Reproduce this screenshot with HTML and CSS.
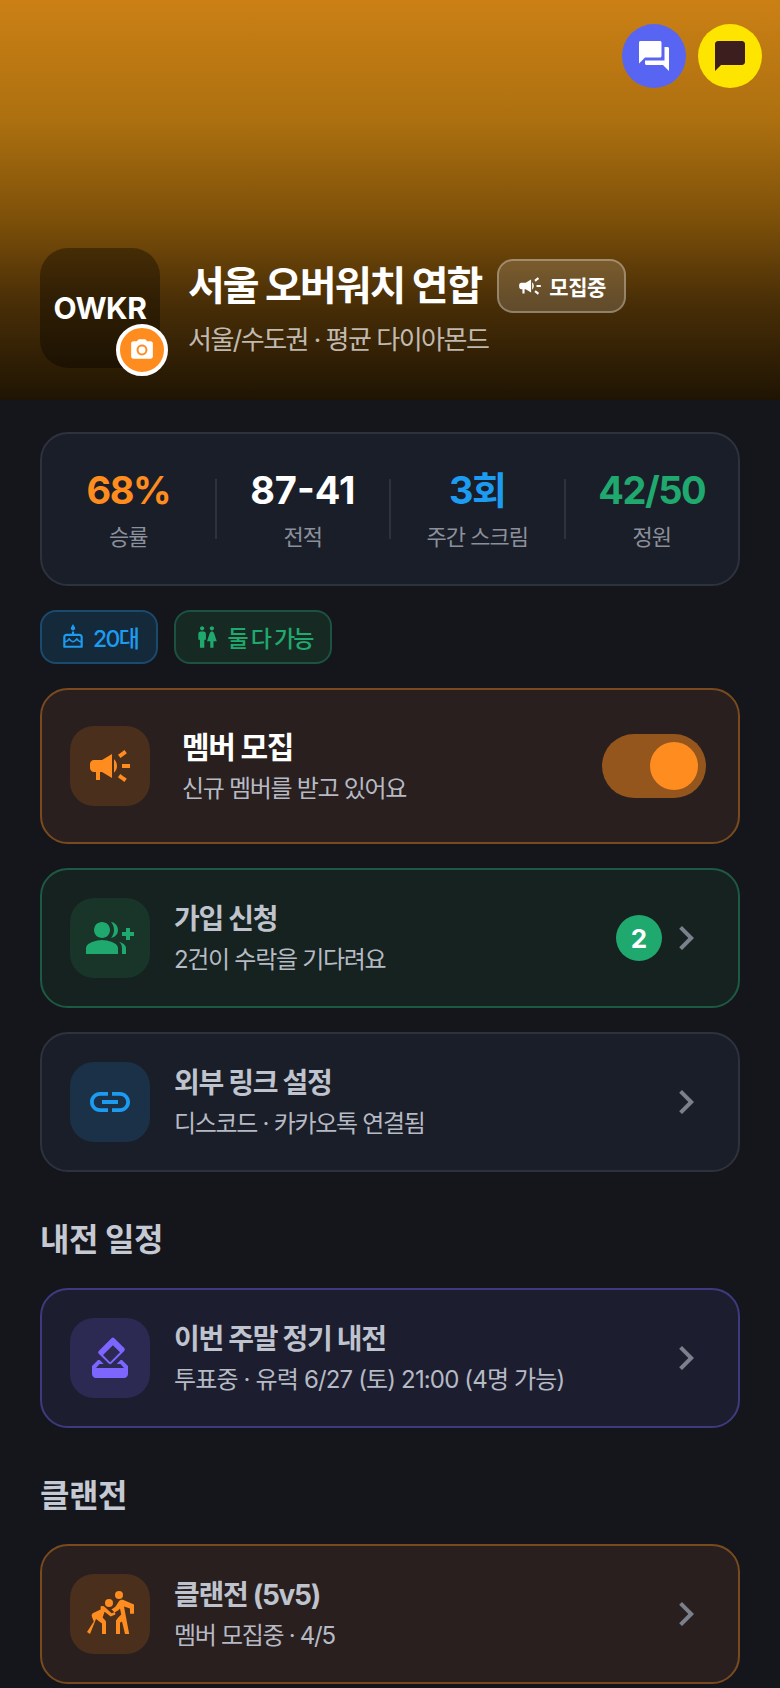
FILE: index.html
```html
<!DOCTYPE html>
<html lang="ko">
<head>
    <meta charset="UTF-8">
    <meta name="viewport" content="width=device-width, initial-scale=1.0">
    <title>서울 오버워치 연합</title>
    <link rel="stylesheet" href="styles.css">
</head>
<body>
    <header class="hero">
        <div class="hero-actions">
            <a class="round-btn discord">
                <svg viewBox="0 0 24 24"><path d="M21 6h-2v9H6v2c0 .55.45 1 1 1h11l4 4V7c0-.55-.45-1-1-1zm-4 6V3c0-.55-.45-1-1-1H3c-.55 0-1 .45-1 1v14l4-4h10c.55 0 1-.45 1-1z"/></svg>
            </a>
            <a class="round-btn kakao">
                <svg viewBox="0 0 24 24"><path d="M20 2H4c-1.1 0-2 .9-2 2v18l4-4h14c1.1 0 2-.9 2-2V4c0-1.1-.9-2-2-2z"/></svg>
            </a>
        </div>
        <div class="hero-info">
            <div class="avatar">
                <span>OWKR</span>
                <div class="avatar-edit">
                    <svg viewBox="0 0 24 24"><circle cx="12" cy="12" r="3.2"/><path d="M9 2L7.17 4H4c-1.1 0-2 .9-2 2v12c0 1.1.9 2 2 2h16c1.1 0 2-.9 2-2V6c0-1.1-.9-2-2-2h-3.17L15 2H9zm3 15c-2.76 0-5-2.24-5-5s2.24-5 5-5 5 2.24 5 5-2.24 5-5 5z"/></svg>
                </div>
            </div>
            <div class="hero-text">
                <div class="hero-title">
                    <h1>서울 오버워치 연합</h1>
                    <span class="recruit-pill">
                        <svg viewBox="0 0 24 24"><use href="#i-campaign"/></svg>
                        모집중
                    </span>
                </div>
                <p class="hero-sub">서울/수도권 · 평균 다이아몬드</p>
            </div>
        </div>
    </header>

    <main class="content">
        <section class="stats">
            <div class="stat">
                <b class="orange">68%</b>
                <span>승률</span>
            </div>
            <i class="divider"></i>
            <div class="stat">
                <b class="white">87-41</b>
                <span>전적</span>
            </div>
            <i class="divider"></i>
            <div class="stat">
                <b class="blue">3회</b>
                <span>주간 스크림</span>
            </div>
            <i class="divider"></i>
            <div class="stat">
                <b class="green">42/50</b>
                <span>정원</span>
            </div>
        </section>

        <div class="chips">
            <span class="chip chip-blue">
                <svg viewBox="0 0 24 24"><path d="M12 6c1.11 0 2-.9 2-2 0-.38-.1-.73-.29-1.03L12 0l-1.71 2.97c-.19.3-.29.65-.29 1.03 0 1.1.9 2 2 2zm6 3h-5V7h-2v2H6c-1.66 0-3 1.34-3 3v9c0 .55.45 1 1 1h16c.55 0 1-.45 1-1v-9c0-1.66-1.34-3-3-3zm1 11H5v-3c.9-.01 1.76-.37 2.4-1.01l1.09-1.07 1.07 1.07c1.31 1.31 3.59 1.3 4.89 0l1.08-1.07 1.07 1.07c.64.64 1.5 1 2.4 1.01v3zm0-4.5c-.51-.01-.99-.2-1.35-.57l-2.13-2.13-2.14 2.13c-.74.74-2.03.74-2.77 0L8.48 12.8l-2.14 2.13c-.35.36-.83.56-1.34.57V12c0-.55.45-1 1-1h12c.55 0 1 .45 1 1v3.5z"/></svg>
                20대
            </span>
            <span class="chip chip-green">
                <svg viewBox="0 0 24 24"><path d="M5.5 22v-7.5H4V9c0-1.1.9-2 2-2h3c1.1 0 2 .9 2 2v5.5H9.5V22h-4zM18 22v-6h3l-2.54-7.63C18.18 7.55 17.42 7 16.56 7h-.12c-.86 0-1.63.55-1.9 1.37L12 16h3v6h3zM7.5 6c1.11 0 2-.89 2-2s-.89-2-2-2-2 .89-2 2 .89 2 2 2zm9 0c1.11 0 2-.89 2-2s-.89-2-2-2-2 .89-2 2 .89 2 2 2z"/></svg>
                둘 다 가능
            </span>
        </div>

        <div class="card card-orange card-toggle">
            <div class="card-icon">
                <svg viewBox="0 0 24 24"><use href="#i-campaign"/></svg>
            </div>
            <div class="card-text">
                <h3>멤버 모집</h3>
                <p>신규 멤버를 받고 있어요</p>
            </div>
            <div class="toggle"><i></i></div>
        </div>

        <div class="card card-green">
            <div class="card-icon">
                <svg viewBox="0 0 24 24"><path d="M22 9V7h-2v2h-2v2h2v2h2v-2h2V9z"/><path d="M8 12c2.21 0 4-1.79 4-4s-1.79-4-4-4-4 1.79-4 4 1.79 4 4 4z"/><path d="M8 13c-2.67 0-8 1.34-8 4v3h16v-3c0-2.66-5.33-4-8-4z"/><path d="M12.51 4.05C13.43 5.11 14 6.49 14 8s-.57 2.89-1.49 3.95C14.47 11.7 16 10.04 16 8s-1.53-3.7-3.49-3.95z"/><path d="M16.53 13.83C17.42 14.66 18 15.7 18 17v3h2v-3c0-1.45-1.59-2.51-3.47-3.17z"/></svg>
            </div>
            <div class="card-text">
                <h3>가입 신청</h3>
                <p>2건이 수락을 기다려요</p>
            </div>
            <span class="count">2</span>
            <svg class="chevron" viewBox="0 0 24 24"><use href="#i-chevron"/></svg>
        </div>

        <div class="card card-blue">
            <div class="card-icon">
                <svg viewBox="0 0 24 24"><path d="M3.9 12c0-1.71 1.39-3.1 3.1-3.1h4V7H7c-2.76 0-5 2.24-5 5s2.24 5 5 5h4v-1.9H7c-1.71 0-3.1-1.39-3.1-3.1zM8 13h8v-2H8v2zm9-6h-4v1.9h4c1.71 0 3.1 1.39 3.1 3.1s-1.39 3.1-3.1 3.1h-4V17h4c2.76 0 5-2.24 5-5s-2.24-5-5-5z"/></svg>
            </div>
            <div class="card-text">
                <h3>외부 링크 설정</h3>
                <p>디스코드 · 카카오톡 연결됨</p>
            </div>
            <svg class="chevron" viewBox="0 0 24 24"><use href="#i-chevron"/></svg>
        </div>

        <h2>내전 일정</h2>

        <div class="card card-purple">
            <div class="card-icon">
                <svg viewBox="0 0 24 24"><path d="M18 13h-.68l-2 2h1.91L19 17H5l1.78-2h2.05l-2-2H6l-3 3v4c0 1.1.89 2 1.99 2H19c1.1 0 2-.89 2-2v-4l-3-3z"/><path fill-rule="evenodd" transform="translate(0 1.2)" d="M17 7.95l-4.95 4.95-3.54-3.54 4.95-4.95L17 7.95zm-4.24-7.07L6.39 7.25c-.39.39-.39 1.02 0 1.41l4.95 4.95c.39.39 1.02.39 1.41 0l6.36-6.36c.39-.39.39-1.02 0-1.41L14.16.89c-.38-.4-1.01-.4-1.4-.01z"/></svg>
            </div>
            <div class="card-text">
                <h3>이번 주말 정기 내전</h3>
                <p class="date-line">투표중 · 유력 6/27 (토) 21:00 (4명 가능)</p>
            </div>
            <svg class="chevron" viewBox="0 0 24 24"><use href="#i-chevron"/></svg>
        </div>

        <h2>클랜전</h2>

        <div class="card card-orange">
            <div class="card-icon">
                <svg viewBox="0 0 24 24"><circle cx="16.5" cy="2.5" r="2"/><circle cx="11.5" cy="6.5" r="2"/><path d="M24 11.9V7.2l-5-2.1c-1-.4-2.1-.1-2.7.8l-1 1.6c-.6 1-1.5 1.7-2.6 2.1l1.6 1.6c1.1-.4 2-1.1 2.7-1.9l.6 3-1.6 1.6L15 15.3V22h2v-5.6l1-.7 1.5 6.3h2.1L19 8.2l3 1.1v2.6h2z"/><path d="M7.3 8.3c.8-.4 1.6-.3 2.2.3l3.3 3 1.7-.6.2 1.3-2.4.9-3-2.3-1 2.8 1.4 1.6c.2.3.3.5.3.9V22H8v-5.2l-3-2.3-3 7.5-1.5-1 3.4-5.2-.9-2.3c-.4-.8-.1-1.6.6-2l3.7-1.7z"/></svg>
            </div>
            <div class="card-text">
                <h3>클랜전 (5v5)</h3>
                <p>멤버 모집중 · 4/5</p>
            </div>
            <svg class="chevron" viewBox="0 0 24 24"><use href="#i-chevron"/></svg>
        </div>
    </main>

    <svg class="icon-defs">
        <symbol id="i-campaign" viewBox="0 0 24 24"><path d="M18 11v2h4v-2h-4zm-2 6.61c.96.71 2.21 1.65 3.2 2.39.4-.53.8-1.07 1.2-1.6-.99-.74-2.24-1.68-3.2-2.4-.4.54-.8 1.08-1.2 1.61zM20.4 5.6c-.4-.53-.8-1.07-1.2-1.6-.99.74-2.24 1.68-3.2 2.4.4.53.8 1.07 1.2 1.6.96-.72 2.21-1.65 3.2-2.4zM4 9c-1.1 0-2 .9-2 2v2c0 1.1.9 2 2 2h1v4h2v-4h1l5 3V6L8 9H4zm11.5 3c0-1.33-.58-2.53-1.5-3.35v6.69c.92-.81 1.5-2.01 1.5-3.34z"/></symbol>
        <symbol id="i-chevron" viewBox="0 0 24 24"><path d="M10 6L8.59 7.41 13.17 12l-4.58 4.59L10 18l6-6z"/></symbol>
    </svg>
</body>
</html>
```

FILE: styles.css
```css
* {
    box-sizing: border-box;
}

body {
    margin: 0;
    background-color: #14161b;
    color: #fff;
    font-family: Inter, "Noto Sans CJK KR", sans-serif;
}

svg {
    display: block;
    fill: currentColor;
    flex-shrink: 0;
}

.icon-defs {
    display: none;
}

h1, h2, h3, p {
    margin: 0;
}

/* hero */
.hero {
    height: 400px;
    position: relative;
    display: flex;
    align-items: flex-end;
    padding: 0 40px 32px;
    background: linear-gradient(to bottom, #cb8015 0%, #ad7010 30%, #7d5009 55%, #4a2f07 75%, #1f1403 100%);
}

.hero-actions {
    position: absolute;
    top: 24px;
    right: 18px;
    display: flex;
    gap: 12px;
}

.round-btn {
    width: 64px;
    height: 64px;
    border-radius: 50%;
    display: flex;
    align-items: center;
    justify-content: center;
}

.round-btn svg {
    width: 36px;
    height: 36px;
}

.discord {
    background-color: #5865f2;
    color: #fff;
}

.kakao {
    background-color: #fee500;
    color: #3c1e1e;
}

.hero-info {
    display: flex;
    align-items: center;
    gap: 28px;
}

.avatar {
    width: 120px;
    height: 120px;
    border-radius: 28px;
    background-color: rgba(0, 0, 0, 0.35);
    display: flex;
    align-items: center;
    justify-content: center;
    position: relative;
    font-size: 30px;
    font-weight: 700;
    letter-spacing: -0.5px;
}

.avatar-edit {
    position: absolute;
    right: -8px;
    bottom: -8px;
    width: 52px;
    height: 52px;
    border-radius: 50%;
    border: 4px solid #fff;
    background-color: #ff8c1f;
    display: flex;
    align-items: center;
    justify-content: center;
}

.avatar-edit svg {
    width: 26px;
    height: 26px;
}

.hero-title {
    display: flex;
    align-items: center;
    gap: 16px;
}

h1 {
    font-size: 40px;
    line-height: 54px;
    font-weight: 700;
    letter-spacing: -2px;
}

.recruit-pill {
    height: 54px;
    display: flex;
    align-items: center;
    gap: 6px;
    padding: 0 18px 0 18px;
    border: 2px solid rgba(255, 255, 255, 0.3);
    border-radius: 16px;
    background-color: rgba(255, 255, 255, 0.15);
    font-size: 21px;
    font-weight: 700;
    letter-spacing: -0.5px;
}

.recruit-pill svg {
    width: 26px;
    height: 26px;
}

.hero-sub {
    margin-top: 10px;
    font-size: 26px;
    line-height: 34px;
    letter-spacing: -1.5px;
    color: rgba(255, 255, 255, 0.7);
}

/* content */
.content {
    padding: 32px 40px 0;
    display: flex;
    flex-direction: column;
    gap: 24px;
}

.stats {
    height: 154px;
    display: flex;
    align-items: center;
    background-color: #1a1e28;
    border: 2px solid #2e323d;
    border-radius: 28px;
}

.stat {
    flex: 1;
    text-align: center;
}

.stat b {
    display: block;
    font-size: 38px;
    line-height: 46px;
    font-weight: 700;
    letter-spacing: -1.5px;
    margin-bottom: 9px;
}

.stat span {
    display: block;
    font-size: 22px;
    line-height: 30px;
    letter-spacing: -1px;
    color: #8b909c;
}

.divider {
    width: 2px;
    height: 60px;
    background-color: #2e323d;
}

.orange { color: #ff8c1f; }
.blue { color: #1d9bf0; }
.green { color: #20a96f; }

.stat .white {
    color: #fff;
    letter-spacing: 0;
}

.chips {
    display: flex;
    gap: 16px;
}

.chip {
    height: 54px;
    display: flex;
    align-items: center;
    gap: 7px;
    padding: 0 18px;
    border: 2px solid;
    border-radius: 16px;
    font-size: 23px;
    font-weight: 500;
    letter-spacing: -1.6px;
}

.chip svg {
    width: 26px;
    height: 26px;
}

.chip-blue {
    color: #1d9bf0;
    background-color: #14293a;
    border-color: #1a4a6e;
}

.chip-green {
    color: #20a96f;
    background-color: #172923;
    border-color: #1b5240;
    letter-spacing: -2px;
}

/* cards */
.card {
    height: 140px;
    display: flex;
    align-items: center;
    padding: 0 28px;
    border: 2px solid;
    border-radius: 28px;
}

.card-icon {
    width: 80px;
    height: 80px;
    border-radius: 24px;
    display: flex;
    align-items: center;
    justify-content: center;
    margin-right: 24px;
}

.card-icon svg {
    width: 48px;
    height: 48px;
}

.card-text {
    flex: 1;
}

.card-text h3 {
    font-size: 28px;
    line-height: 36px;
    font-weight: 700;
    letter-spacing: -1.3px;
    color: #bfc3cd;
    margin-bottom: 7px;
}

.card-text p {
    font-size: 24px;
    line-height: 32px;
    letter-spacing: -1.3px;
    color: #b6bac4;
}

.card-text .date-line {
    letter-spacing: -0.85px;
}

.card-toggle {
    height: 156px;
}

.card-toggle .card-icon {
    margin-right: 32px;
}

.card-toggle h3 {
    font-size: 30px;
    line-height: 38px;
    color: #fff;
}

.chevron {
    width: 48px;
    height: 48px;
    color: #7b808c;
}

.count {
    width: 46px;
    height: 46px;
    border-radius: 50%;
    background-color: #20a96f;
    display: flex;
    align-items: center;
    justify-content: center;
    font-size: 26px;
    font-weight: 700;
}

.toggle {
    width: 104px;
    height: 64px;
    border-radius: 32px;
    background-color: #94561d;
    display: flex;
    justify-content: flex-end;
    align-items: center;
    padding: 0 8px;
    margin-right: 4px;
}

.toggle i {
    width: 48px;
    height: 48px;
    border-radius: 50%;
    background-color: #ff8c1f;
}

.card-orange {
    background-color: #281f1e;
    border-color: #7a4a1f;
}

.card-orange .card-icon {
    background-color: #4a2f1c;
    color: #ff8c1f;
}

.card-green {
    background-color: #15221f;
    border-color: #1d5a43;
}

.card-green .card-icon {
    background-color: #193529;
    color: #20a96f;
}

.card-blue {
    background-color: #1a1e28;
    border-color: #2e323d;
}

.card-blue .card-icon {
    background-color: #1a3148;
    color: #1d9bf0;
}

.card-purple {
    background-color: #1c1e30;
    border-color: #3f3a80;
}

.card-purple .card-icon {
    background-color: #2c2a52;
    color: #7c66ff;
}

h2 {
    margin: 22px 0 2px;
    font-size: 32px;
    line-height: 44px;
    font-weight: 700;
    letter-spacing: -0.5px;
    color: #c5c9d3;
}
```
